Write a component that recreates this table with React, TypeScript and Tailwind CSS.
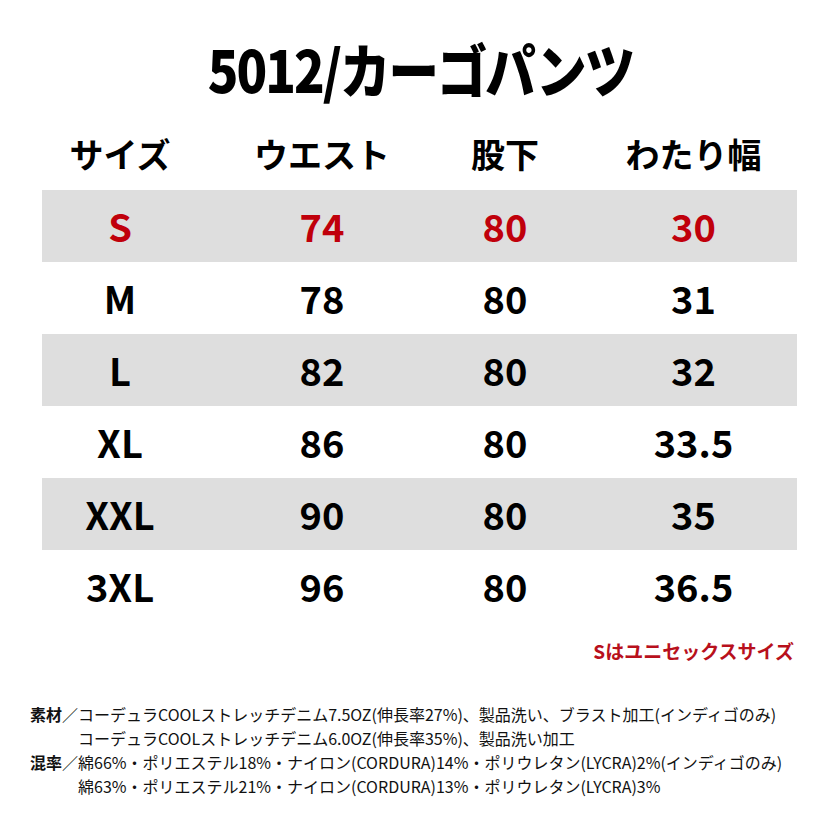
import React from 'react';

const rows = [
    { size: 'S', waist: '74', inseam: '80', thigh: '30' },
    { size: 'M', waist: '78', inseam: '80', thigh: '31' },
    { size: 'L', waist: '82', inseam: '80', thigh: '32' },
    { size: 'XL', waist: '86', inseam: '80', thigh: '33.5' },
    { size: 'XXL', waist: '90', inseam: '80', thigh: '35' },
    { size: '3XL', waist: '96', inseam: '80', thigh: '36.5' },
];

const font = { fontFamily: '"Noto Sans CJK JP", "Noto Sans", sans-serif' };

const App: React.FC = () => {
    return (
        <div className="w-[840px] h-[840px] bg-white text-black flex flex-col font-['Noto_Sans_CJK_JP','Noto_Sans',sans-serif]" style={font}>
            {/* title */}
            <div className="h-[118px] pt-[18px] flex justify-center items-center">
                <h1 className="text-[58px] font-black leading-none tracking-[-0.04em] scale-x-[0.87]">5012/カーゴパンツ</h1>
            </div>

            {/* size table */}
            <div className="mx-[42px] w-[755px]">
                <div className="grid grid-cols-[156px_248px_118px_1fr] h-[72px] items-center text-[34px] font-bold leading-none">
                    <span className="text-center">サイズ</span>
                    <span className="text-center">ウエスト</span>
                    <span className="text-center">股下</span>
                    <span className="text-center pl-[26px]">わたり幅</span>
                </div>
                {rows.map((r, i) => (
                    <div
                        key={r.size}
                        className={`grid grid-cols-[156px_248px_118px_1fr] h-[72px] items-center text-[38px] font-bold leading-none ${i % 2 === 0 ? 'bg-[#dedede]' : 'bg-white'
                            } ${i === 0 ? 'text-[#c0000b]' : 'text-black'}`}
                    >
                        <span className="text-center">{r.size}</span>
                        <span className="text-center">{r.waist}</span>
                        <span className="text-center">{r.inseam}</span>
                        <span className="text-center pl-[26px]">{r.thigh}</span>
                    </div>
                ))}
            </div>

            {/* note */}
            <div className="mt-[14px] h-[28px] flex items-center justify-end pr-[46px]">
                <span className="text-[19px] font-bold text-[#b8101c] leading-none">Sはユニセックスサイズ</span>
            </div>

            {/* material */}
            <div className="mt-[38px] pl-[30px] text-[16px] leading-[24px] text-[#111]">
                <p className="whitespace-nowrap">
                    <span className="font-bold">素材</span>／コーデュラCOOLストレッチデニム7.5OZ(伸長率27%)、製品洗い、ブラスト加工(インディゴのみ)
                </p>
                <p className="whitespace-nowrap pl-[3em]">コーデュラCOOLストレッチデニム6.0OZ(伸長率35%)、製品洗い加工</p>
                <p className="whitespace-nowrap">
                    <span className="font-bold">混率</span>／綿66%・ポリエステル18%・ナイロン(CORDURA)14%・ポリウレタン(LYCRA)2%(インディゴのみ)
                </p>
                <p className="whitespace-nowrap pl-[3em]">綿63%・ポリエステル21%・ナイロン(CORDURA)13%・ポリウレタン(LYCRA)3%</p>
            </div>
        </div>
    );
};

export default App;
